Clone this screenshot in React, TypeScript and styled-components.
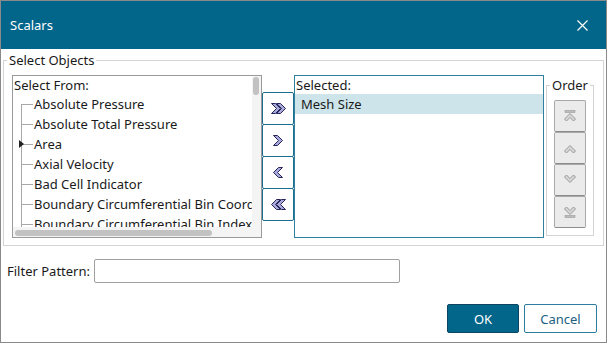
import styled, { createGlobalStyle } from 'styled-components';

const font = `"Noto Sans", "Open Sans", sans-serif`;

const colors = {
  title: '#02658a',
  text: '#1a1a1a',
  teal: '#1c6d90',
  frame: '#d4d4d4',
  listBorder: '#9a9a9a',
  selectedRow: '#cde5ea',
  scrollTrack: '#f4f4f4',
  scrollThumb: '#c2c2c2',
  tree: '#a8a8a8',
};

const GlobalStyle = createGlobalStyle`
  html, body {
    margin: 0;
    padding: 0;
    background: #ffffff;
  }
  body {
    font-family: ${font};
    font-size: 12px;
    color: ${colors.text};
  }
`;

const Dialog = styled.div`
  box-sizing: border-box;
  width: 607px;
  height: 343px;
  display: flex;
  flex-direction: column;
  border: 1px solid #8a8a8a;
  background: #ffffff;
`;

const TitleBar = styled.div`
  height: 48px;
  display: flex;
  align-items: center;
  justify-content: space-between;
  padding: 0 18px 0 9px;
  background: ${colors.title};
  color: #ffffff;
  font-size: 13px;
`;

const CloseIcon = styled.svg`
  width: 11px;
  height: 11px;
  display: block;
`;

const Group = styled.fieldset`
  margin: 3px 2px 0;
  padding: 0 0 7px;
  border: 1px solid ${colors.frame};
  min-width: 0;
`;

const GroupLegend = styled.legend`
  margin-left: 3px;
  padding: 0 2px;
  line-height: 16px;
  font-size: 13px;
`;

const Transfer = styled.div`
  display: flex;
  align-items: flex-start;
  margin: 7px 0 0 8px;
`;

const ListBox = styled.div<{ $accent?: boolean }>`
  box-sizing: border-box;
  width: 250px;
  height: 163px;
  border: 1px solid ${p => (p.$accent ? '#2f7f9f' : colors.listBorder)};
  overflow: hidden;
`;

const TreeBox = styled(ListBox)`
  display: grid;
  grid-template-columns: 1fr 9px;
  grid-template-rows: 1fr 10px;
`;

const Viewport = styled.div`
  overflow: hidden;
  white-space: nowrap;
`;

const ListHeader = styled.div`
  height: 18px;
  line-height: 18px;
  padding-left: 1px;
  font-size: 13px;
`;

const TreeRow = styled.div<{ $first?: boolean }>`
  position: relative;
  height: 20px;
  line-height: 20px;
  padding-left: 21px;
  font-size: 13px;

  &::before {
    content: '';
    position: absolute;
    left: 8px;
    top: ${p => (p.$first ? '10px' : '0')};
    bottom: 0;
    border-left: 1px solid ${colors.tree};
  }

  &::after {
    content: '';
    position: absolute;
    left: 8px;
    width: 12px;
    top: 10px;
    border-top: 1px solid ${colors.tree};
  }
`;

const Expander = styled.span`
  position: absolute;
  left: 6px;
  top: 6px;
  width: 0;
  height: 0;
  border-top: 4px solid transparent;
  border-bottom: 4px solid transparent;
  border-left: 5px solid #222222;
  z-index: 1;
`;

const VScroll = styled.div`
  grid-row: 1 / span 2;
  grid-column: 2;
  background: ${colors.scrollTrack};
  padding: 1px 0 0 1px;
`;

const HScroll = styled.div`
  background: ${colors.scrollTrack};
  padding: 3px 0 0 2px;
`;

const Thumb = styled.div<{ $vertical?: boolean }>`
  background: ${colors.scrollThumb};
  border-radius: 3px;
  width: ${p => (p.$vertical ? '6px' : '197px')};
  height: ${p => (p.$vertical ? '18px' : '6px')};
`;

const ArrowColumn = styled.div`
  display: flex;
  flex-direction: column;
  margin-top: 17px;
`;

const ArrowButton = styled.button`
  box-sizing: border-box;
  width: 32px;
  height: 33px;
  margin: 0 0 -1px;
  padding: 0;
  display: flex;
  align-items: center;
  justify-content: center;
  background: #ffffff;
  border: 1px solid ${colors.teal};
  border-radius: 2px;
`;

const SelectedRow = styled.div`
  height: 20px;
  line-height: 20px;
  padding-left: 6px;
  background: ${colors.selectedRow};
  font-size: 13px;
`;

const OrderGroup = styled.fieldset`
  box-sizing: border-box;
  width: 48px;
  height: 159px;
  margin: 2px 0 0 2px;
  padding: 7px 0 0;
  border: 1px solid ${colors.frame};
  min-width: 0;
`;

const OrderLegend = styled.legend`
  margin-left: 3px;
  padding: 0 2px;
  line-height: 16px;
  font-size: 13px;
`;

const OrderStack = styled.div`
  display: flex;
  flex-direction: column;
  margin-left: 7px;
`;

const OrderButton = styled.button`
  box-sizing: border-box;
  display: flex;
  align-items: center;
  justify-content: center;
  width: 32px;
  height: 32px;
  padding: 0;
  background: #ebebeb;
  border: 1px solid #a8a8a8;
  border-bottom-color: #8c8c8c;
  border-radius: 2px;
`;

const FilterRow = styled.div`
  display: flex;
  align-items: center;
  gap: 4px;
  margin: 13px 0 0 6px;
  font-size: 13px;
`;

const FilterInput = styled.input`
  box-sizing: border-box;
  width: 306px;
  height: 24px;
  margin: 0;
  border: 1px solid #a0a0a0;
  border-radius: 2px;
  outline: none;
`;

const Footer = styled.div`
  display: flex;
  justify-content: flex-end;
  gap: 5px;
  margin-top: 21px;
  padding-right: 9px;
`;

const DialogButton = styled.button<{ $primary?: boolean }>`
  box-sizing: border-box;
  width: ${p => (p.$primary ? '72px' : '73px')};
  height: 29px;
  padding: 0;
  font-family: ${font};
  font-size: 13px;
  border-radius: 2px;
  color: ${p => (p.$primary ? '#ffffff' : '#1d5f80')};
  background: ${p => (p.$primary ? colors.title : '#ffffff')};
  border: 1px solid ${p => (p.$primary ? '#0d4560' : '#2a7ca0')};
`;

const ArrowIcon = ({ dir, double }: { dir: 'left' | 'right'; double?: boolean }) => {
  const chevron = '0,0 4,0 9,5 4,10 0,10 5,5';
  const width = double ? 14 : 9;
  return (
    <svg width={width + 1} height={11} viewBox={`-0.5 -0.5 ${width + 1} 11`}>
      <g transform={dir === 'left' ? `translate(${width} 0) scale(-1 1)` : undefined}>
        <polygon points={chevron} fill="#a9a9dc" stroke="#25255a" strokeWidth={1} />
        {double && (
          <polygon
            points={chevron}
            transform="translate(5 0)"
            fill="#a9a9dc"
            stroke="#25255a"
            strokeWidth={1}
          />
        )}
      </g>
    </svg>
  );
};

const OrderIcon = ({ dir, bar }: { dir: 'up' | 'down'; bar?: boolean }) => (
  <svg width={14} height={14} viewBox="0 0 14 14">
    <g transform={dir === 'down' ? 'translate(0 14) scale(1 -1)' : undefined}>
      {bar && <rect x={2} y={1.5} width={10} height={2} fill="#bcbcbc" stroke="#9c9c9c" strokeWidth={0.6} />}
      <polygon
        points="7,4.5 12.5,10 10.5,12 7,8.5 3.5,12 1.5,10"
        fill="#d6d6d6"
        stroke="#9a9a9a"
        strokeWidth={1}
      />
    </g>
  </svg>
);

const sources = [
  'Absolute Pressure',
  'Absolute Total Pressure',
  'Area',
  'Axial Velocity',
  'Bad Cell Indicator',
  'Boundary Circumferential Bin Coordinate',
  'Boundary Circumferential Bin Index',
];

export default function App() {
  return (
    <>
      <GlobalStyle />
      <Dialog>
        <TitleBar>
          <span>Scalars</span>
          <CloseIcon viewBox="0 0 11 11">
            <path d="M0.5 0.5 L10.5 10.5 M10.5 0.5 L0.5 10.5" stroke="#ffffff" strokeWidth={1.2} />
          </CloseIcon>
        </TitleBar>

        <Group>
          <GroupLegend>Select Objects</GroupLegend>
          <Transfer>
            <TreeBox>
              <Viewport>
                <ListHeader>Select From:</ListHeader>
                {sources.map((name, i) => (
                  <TreeRow key={name} $first={i === 0}>
                    {name === 'Area' && <Expander />}
                    {name}
                  </TreeRow>
                ))}
              </Viewport>
              <VScroll>
                <Thumb $vertical />
              </VScroll>
              <HScroll>
                <Thumb />
              </HScroll>
            </TreeBox>

            <ArrowColumn>
              <ArrowButton><ArrowIcon dir="right" double /></ArrowButton>
              <ArrowButton><ArrowIcon dir="right" /></ArrowButton>
              <ArrowButton><ArrowIcon dir="left" /></ArrowButton>
              <ArrowButton><ArrowIcon dir="left" double /></ArrowButton>
            </ArrowColumn>

            <ListBox $accent>
              <ListHeader>Selected:</ListHeader>
              <SelectedRow>Mesh Size</SelectedRow>
            </ListBox>

            <OrderGroup>
              <OrderLegend>Order</OrderLegend>
              <OrderStack>
                <OrderButton><OrderIcon dir="up" bar /></OrderButton>
                <OrderButton><OrderIcon dir="up" /></OrderButton>
                <OrderButton><OrderIcon dir="down" /></OrderButton>
                <OrderButton><OrderIcon dir="down" bar /></OrderButton>
              </OrderStack>
            </OrderGroup>
          </Transfer>
        </Group>

        <FilterRow>
          <span>Filter Pattern:</span>
          <FilterInput />
        </FilterRow>

        <Footer>
          <DialogButton $primary>OK</DialogButton>
          <DialogButton>Cancel</DialogButton>
        </Footer>
      </Dialog>
    </>
  );
}
